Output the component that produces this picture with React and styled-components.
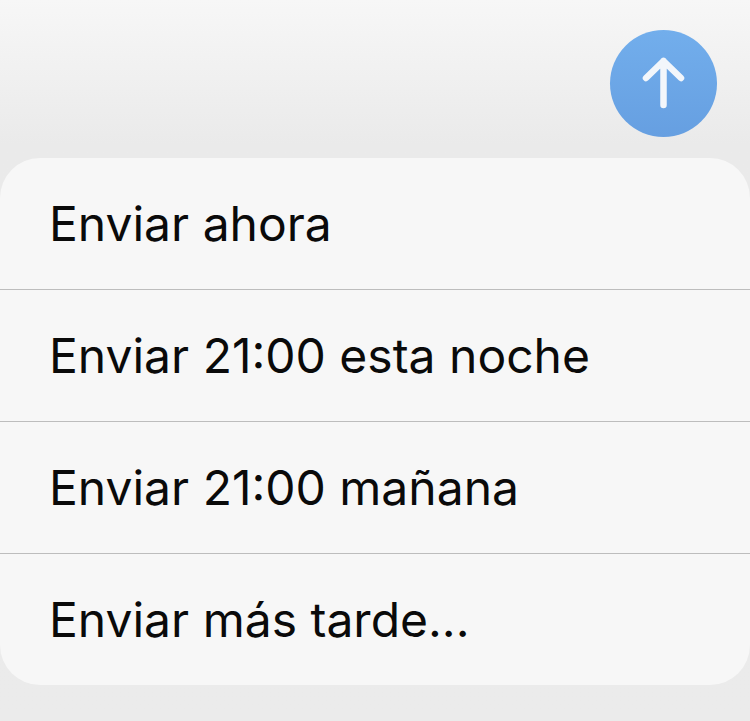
import styled, { createGlobalStyle } from "styled-components";

const GlobalStyle = createGlobalStyle`
  html, body {
    margin: 0;
    padding: 0;
    background: #ebebeb;
  }
`;

const Screen = styled.div`
  width: 750px;
  height: 721px;
  overflow: hidden;
  background: linear-gradient(180deg, #f7f7f7 0%, #eaeaea 20%, #ebebeb 100%);
  font-family: Inter, "Liberation Sans", sans-serif;
`;

const TopBar = styled.div`
  height: 158px;
  box-sizing: border-box;
  padding: 30px 33px 0 0;
  display: flex;
  justify-content: flex-end;
`;

const SendButton = styled.button`
  width: 107px;
  height: 107px;
  padding: 0;
  border: none;
  border-radius: 50%;
  background: linear-gradient(180deg, #72aeec 0%, #669fe1 100%);
  display: flex;
  align-items: center;
  justify-content: center;
`;

const Menu = styled.div`
  background: #f7f7f7;
  border-radius: 40px;
  display: flex;
  flex-direction: column;
`;

const MenuItem = styled.div`
  height: 131px;
  padding-left: 49px;
  display: flex;
  align-items: center;
  font-size: 48px;
  color: #0a0a0a;
  white-space: nowrap;
  border-bottom: ${(p) => (p.$last ? "none" : "1px solid #bdbdbd")};
`;

const items = [
  "Enviar ahora",
  "Enviar 21:00 esta noche",
  "Enviar 21:00 mañana",
  "Enviar más tarde...",
];

export default function App() {
  return (
    <Screen>
      <GlobalStyle />
      <TopBar>
        <SendButton>
          <svg width="107" height="107" viewBox="0 0 107 107" fill="none">
            <path
              d="M53.5 31V75M36 48L53.5 31L71 48"
              stroke="#f2f6fb"
              strokeWidth="6.5"
              strokeLinecap="round"
              strokeLinejoin="round"
            />
          </svg>
        </SendButton>
      </TopBar>
      <Menu>
        {items.map((text, i) => (
          <MenuItem key={text} $last={i === items.length - 1}>
            {text}
          </MenuItem>
        ))}
      </Menu>
    </Screen>
  );
}
